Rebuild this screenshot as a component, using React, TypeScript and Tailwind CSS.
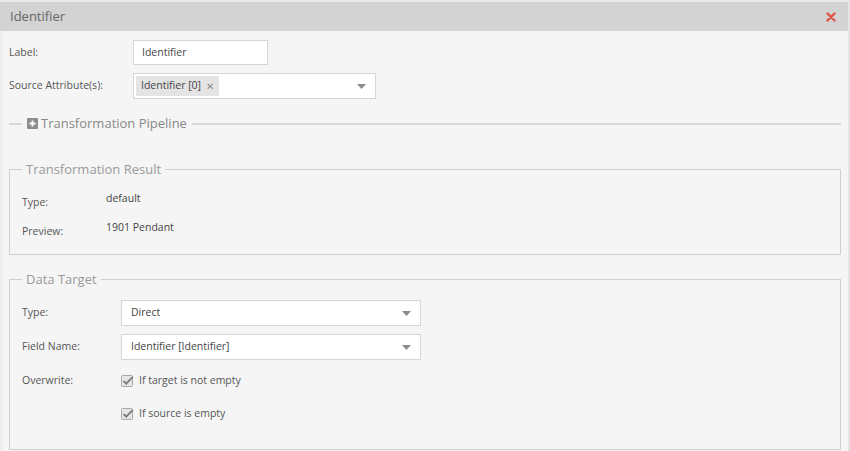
import React from 'react';

const font = { fontFamily: '"Open Sans", "Liberation Sans", sans-serif' };

function Caret() {
  return (
    <svg width="9" height="5" viewBox="0 0 9 5" className="shrink-0">
      <path d="M0 0 L9 0 L4.5 5 Z" fill="#8a8a8a" />
    </svg>
  );
}

function Check({ label }: { label: string }) {
  return (
    <div className="flex items-center gap-[5px] h-[16px]">
      <svg width="13" height="13" viewBox="0 0 13 13" className="shrink-0">
        <rect x="0.5" y="0.5" width="11" height="11" rx="1" fill="#e6e6e6" stroke="#a9a9a9" />
        <path d="M2.6 6 L5.2 8.6 L11.8 1.8" fill="none" stroke="#7b7b7b" strokeWidth="1.8" />
      </svg>
      <span className="text-[10.5px] text-[#555]">{label}</span>
    </div>
  );
}

function Select({ value, width }: { value: string; width: string }) {
  return (
    <div className={`${width} h-[26px] bg-white border border-[#d6d6d6] flex items-center justify-between pl-[9px] pr-[9px]`}>
      <span className="text-[10.5px] text-[#444]">{value}</span>
      <Caret />
    </div>
  );
}

export default function App() {
  return (
    <div className="w-[850px] h-[451px] overflow-hidden bg-[#f5f5f5] border-r-2 border-[#e4e4e4]" style={font}>
      {/* Header */}
      <div className="h-[31px] bg-[#d3d3d3] border-t-2 border-[#e9e9e9] flex items-center justify-between pl-[10px] pr-[12px]">
        <span className="text-[13px] text-[#666]">Identifier</span>
        <svg width="10" height="10" viewBox="0 0 10 10">
          <path d="M1.5 1.5 L8.5 8.5 M8.5 1.5 L1.5 8.5" stroke="#de5448" strokeWidth="2.4" strokeLinecap="round" />
        </svg>
      </div>

      <div className="pl-[6px] pr-[7px] border-l-[3px] border-[#ededed]">
        {/* Top form */}
        <div className="grid grid-cols-[124px_1fr] gap-y-[8px] items-center pt-[9px]">
          <span className="text-[10.5px] text-[#555]">Label:</span>
          <div className="w-[135px] h-[25px] bg-white border border-[#d6d6d6] flex items-center pl-[8px]">
            <span className="text-[10.5px] text-[#444]">Identifier</span>
          </div>
          <span className="text-[10.5px] text-[#555]">Source Attribute(s):</span>
          <div className="w-[243px] h-[26px] bg-white border border-[#d6d6d6] flex items-center justify-between pl-[2px] pr-[9px]">
            <span className="h-[20px] bg-[#e4e4e4] flex items-center gap-[5px] px-[5px] text-[10.5px] text-[#444]">
              Identifier [0]
              <span className="text-[10px] text-[#888]">✕</span>
            </span>
            <Caret />
          </div>
        </div>

        {/* Transformation Pipeline */}
        <fieldset className="mt-[15px] border-t-2 border-[#d8d8d8]">
          <legend className="ml-[13px] px-[5px] flex items-center gap-[3px] text-[13px] text-[#888]">
            <svg width="11" height="11" viewBox="0 0 11 11">
              <rect width="11" height="11" rx="1" fill="#8c8c8c" />
              <path d="M5.5 2.5 V8.5 M2.5 5.5 H8.5" stroke="#fff" strokeWidth="1.8" />
            </svg>
            Transformation Pipeline
          </legend>
        </fieldset>

        {/* Transformation Result */}
        <fieldset className="mt-[26px] border border-[#cfcfcf] h-[95px] pl-[12px]">
          <legend className="px-[4px] text-[13px] text-[#999]">Transformation Result</legend>
          <div className="grid grid-cols-[84px_1fr] gap-y-[8px] pt-[11px]">
            <span className="pt-[5px] text-[10.5px] text-[#555]">Type:</span>
            <span className="pt-[1px] text-[10.5px] text-[#444]">default</span>
            <span className="pt-[5px] text-[10.5px] text-[#555]">Preview:</span>
            <span className="pt-[1px] text-[10.5px] text-[#444]">1901 Pendant</span>
          </div>
        </fieldset>

        {/* Data Target */}
        <fieldset className="mt-[15px] border border-[#cfcfcf] h-[180px] pl-[12px]">
          <legend className="px-[4px] text-[13px] text-[#999]">Data Target</legend>
          <div className="grid grid-cols-[99px_1fr] gap-y-[8px] items-center pt-[11px]">
            <span className="text-[10.5px] text-[#555]">Type:</span>
            <Select value="Direct" width="w-[300px]" />
            <span className="text-[10.5px] text-[#555]">Field Name:</span>
            <Select value="Identifier [Identifier]" width="w-[300px]" />
            <span className="text-[10.5px] text-[#555] pt-[5px]">Overwrite:</span>
            <div className="pt-[5px]">
              <Check label="If target is not empty" />
            </div>
            <span />
            <div className="pt-[9px]">
              <Check label="If source is empty" />
            </div>
          </div>
        </fieldset>
      </div>
    </div>
  );
}
